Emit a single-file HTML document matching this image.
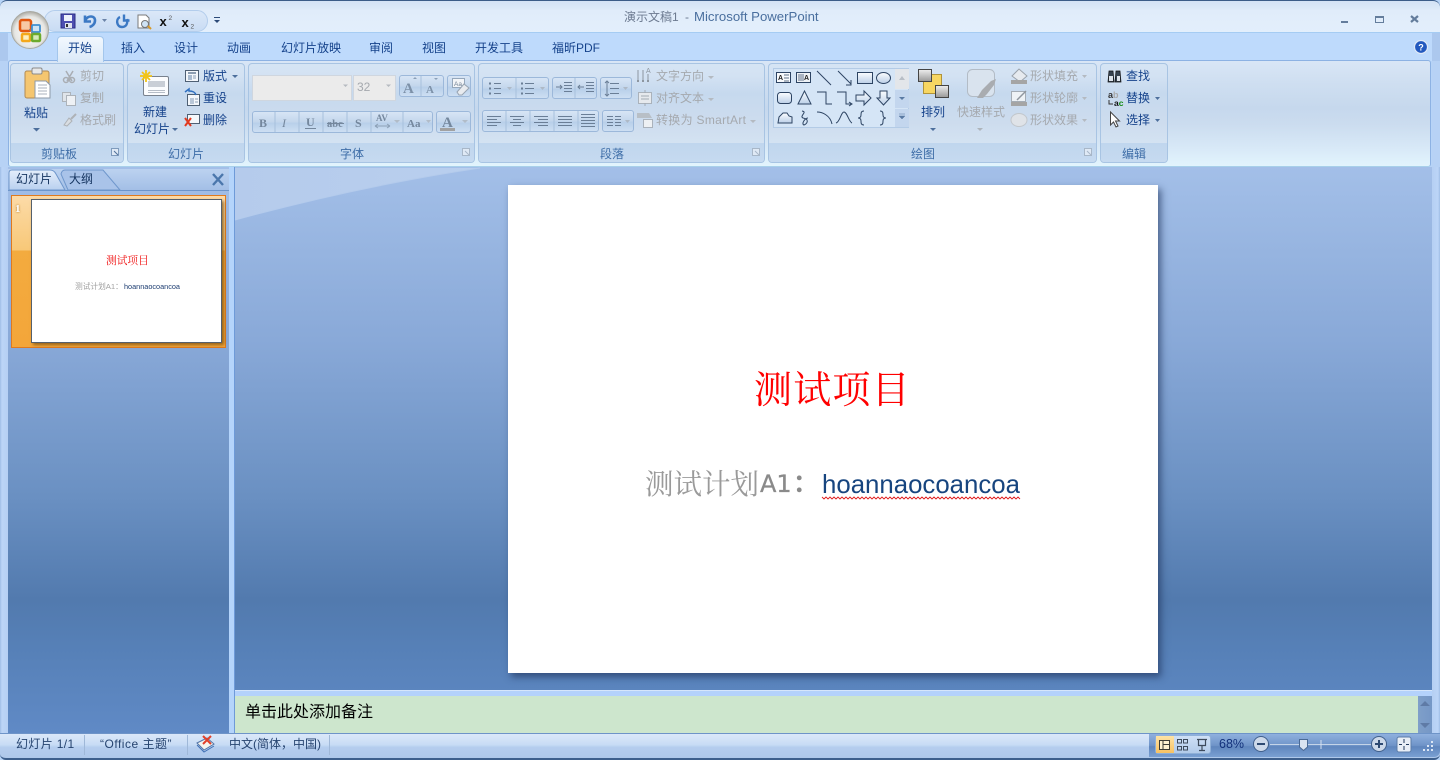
<!DOCTYPE html>
<html lang="zh-CN">
<head>
<meta charset="utf-8">
<title>演示文稿1 - Microsoft PowerPoint</title>
<style>
html,body{margin:0;padding:0;width:1440px;height:760px;overflow:hidden;background:#b7d4f7}
#app{position:relative;width:1440px;height:760px;overflow:hidden;font-family:"Liberation Sans","Noto Sans CJK SC",sans-serif}
.a{position:absolute}
.t{position:absolute;z-index:2;white-space:nowrap;font-size:12px;line-height:14px;color:#15428b;font-family:"Liberation Sans","Noto Sans CJK SC",sans-serif}
.d{color:#a5a9ae}
.g{position:absolute;top:63px;height:100px;box-sizing:border-box;border:1px solid #a8c4e3;border-radius:4px;background:linear-gradient(#d5e4f4 0,#d3e2f3 12%,#c6d9ee 30%,#cddcee 60%,#d4e3f2 80px);overflow:hidden}
.g i{position:absolute;left:0;right:0;bottom:0;height:19px;background:linear-gradient(#c0d6ee,#c6daf0)}
.l{position:absolute;z-index:2;white-space:nowrap;font-size:12px;line-height:14px;color:#3f6ea8;top:147px}
.b{position:absolute;box-sizing:border-box;border:1px solid #9cb8da;border-radius:3px;background:linear-gradient(#d7e5f5,#c3d6ec 50%,#b8cfe9 55%,#cddff2)}
.tb{position:absolute;z-index:2;top:41px;white-space:nowrap;font-size:12px;line-height:14px;color:#15428b}
svg{position:absolute;left:0;top:0;z-index:1}
</style>
</head>
<body>
<div id="app">
  <!-- window frame -->
  <div class="a" style="left:0;top:0;width:1440px;height:33px;background:linear-gradient(#d3e2f5 0,#dce9f8 8px,#e0ecfa 9px,#e3effc 32px);border-top:1px solid #3b5c88;box-sizing:border-box;border-radius:7px 7px 0 0"></div>
  <div class="a" style="left:0;top:32px;width:1440px;height:1px;background:#a5ccf3"></div>
  <div class="a" style="left:0;top:33px;width:1440px;height:28px;background:#bedafc"></div>
  <div class="a" style="left:0;top:33px;width:8px;height:28px;background:#acc8ee"></div>
  <div class="a" style="left:1432px;top:33px;width:8px;height:28px;background:#acc8ee"></div>
  <div class="a" style="left:8px;top:60px;width:1423px;height:107px;box-sizing:border-box;border:1px solid #8db2e3;border-bottom:1px solid #a8d0ea;border-radius:3px;background:linear-gradient(#d9e6f6 0,#cfdff1 20%,#c6d8ed 45%,#cbdcef 60%,#d6e7f6 80%,#e2f4fd 100%)"></div>
  <div class="a" style="left:0;top:61px;width:8px;height:107px;background:#b7d2f5"></div>
  <div class="a" style="left:1432px;top:61px;width:8px;height:107px;background:#b7d2f5"></div>

  <!-- main background -->
  <div class="a" style="left:0;top:167px;width:1440px;height:568px;background:linear-gradient(#a3bfe8 0,#89a9d8 173px,#6a90c2 330px,#527aae 433px,#5680b7 480px,#608ac6 568px)"></div>
  <div class="a" style="left:0;top:167px;width:8px;height:568px;background:linear-gradient(90deg,#9fbde6 0,#bcd5f7 2px,#b5cff3 8px)"></div>
  <div class="a" style="left:229px;top:167px;width:5px;height:568px;background:#b4d4fb;border-right:1px solid #6e9ad8;box-sizing:content-box"></div>
  <div class="a" style="left:1432px;top:167px;width:8px;height:568px;background:linear-gradient(90deg,#b5cff3,#bcd5f7 6px,#9fbde6)"></div>

  <!-- groups -->
  <div class="g" style="left:10px;width:114px"><i></i></div>
  <div class="g" style="left:127px;width:118px"><i></i></div>
  <div class="g" style="left:248px;width:227px"><i></i></div>
  <div class="g" style="left:478px;width:287px"><i></i></div>
  <div class="g" style="left:768px;width:329px"><i></i></div>
  <div class="g" style="left:1100px;width:68px"><i></i></div>

  <!-- font/para controls -->
  <div class="a" style="left:252px;top:75px;width:100px;height:26px;box-sizing:border-box;background:#ebebeb;border:1px solid #cfd6df"></div>
  <div class="a" style="left:353px;top:75px;width:43px;height:26px;box-sizing:border-box;background:#ebebeb;border:1px solid #cfd6df"></div>
  <div class="b" style="left:399px;top:75px;width:45px;height:22px"></div>
  <div class="b" style="left:447px;top:75px;width:24px;height:22px"></div>
  <div class="b" style="left:252px;top:111px;width:181px;height:22px"></div>
  <div class="b" style="left:436px;top:111px;width:35px;height:22px"></div>
  <div class="b" style="left:482px;top:77px;width:67px;height:22px"></div>
  <div class="b" style="left:552px;top:77px;width:45px;height:22px"></div>
  <div class="b" style="left:600px;top:77px;width:32px;height:22px"></div>
  <div class="b" style="left:482px;top:110px;width:117px;height:22px"></div>
  <div class="b" style="left:602px;top:110px;width:32px;height:22px"></div>
  <div class="a" style="left:773px;top:68px;width:136px;height:60px;box-sizing:border-box;border:1px solid #b3cbe6;background:#d5e5f6"></div>
  <div class="a" style="left:895px;top:69px;width:14px;height:20px;background:#e3e6ea"></div>
  <div class="a" style="left:895px;top:90px;width:14px;height:18px;background:#c3d6ee"></div>
  <div class="a" style="left:895px;top:109px;width:14px;height:18px;background:#c3d6ee"></div>

  <!-- active tab -->
  <div class="a" style="left:57px;top:36px;width:47px;height:26px;box-sizing:border-box;border:1px solid #a3c6ec;border-bottom:0;border-radius:4px 4px 0 0;background:linear-gradient(#f2f8fe,#dbe9f8)"></div>

  <!-- quick access pill -->
  <div class="a" style="left:44px;top:10px;width:164px;height:22px;box-sizing:border-box;border:1px solid #b3cdec;border-radius:11px;background:linear-gradient(#dbe8f8,#c9dcf4)"></div>

  <!-- slide pane tabs -->
  <div class="a" style="left:8px;top:169px;width:221px;height:21px;background:linear-gradient(#bcd2f0,#a3bfe6)"></div>
  <div class="a" style="left:8px;top:190px;width:221px;height:1px;background:#6c94ca"></div>

  <!-- thumbnail -->
  <div class="a" style="left:11px;top:195px;width:215px;height:153px;box-sizing:border-box;border:1px solid #e07a1d;background:linear-gradient(#fcdba8 0,#f8c878 54px,#f3ab3f 55px,#f3a63a 100%)"></div>
  <div class="a" style="left:31px;top:199px;width:191px;height:144px;box-sizing:border-box;background:#fff;border:1px solid #55606c;box-shadow:2px 2px 3px rgba(110,70,10,.7)"></div>
  <div class="t" style="left:15px;top:202px;font:bold 11px/14px 'Liberation Serif',serif;color:#fff;text-shadow:0 0 2px #a86a10">1</div>
  <div class="t" style="left:106px;top:254px;font-size:10.7px;color:#f01010;font-family:'Noto Serif CJK SC',serif">测试项目</div>
  <div class="t" style="left:75px;top:280px;font-size:7.7px;color:#a0a0a0">测试计划A1：</div>
  <div class="t" style="left:124px;top:280px;font-size:7.3px;color:#1c3c70">hoannaocoancoa</div>

  <!-- slide -->
  <div class="a" style="left:508px;top:185px;width:650px;height:488px;background:#fff;box-shadow:3px 4px 7px rgba(30,50,90,.65)"></div>
  <div class="t" style="left:754px;top:364px;font-size:38px;line-height:46px;letter-spacing:1.2px;color:#f00;font-family:'Noto Serif CJK SC',serif">测试项目</div>
  <div class="t" style="left:645px;top:466px;font-size:28.5px;line-height:34px;color:#9a9a9a;font-family:'Noto Serif CJK SC',serif">测试计划</div>
  <div class="t" style="left:760px;top:468px;font-size:24px;line-height:32px;color:#8a8a8a;-webkit-text-stroke:.3px #8a8a8a;font-family:'DejaVu Sans',sans-serif">A1</div>
  <div class="t" style="left:793px;top:468px;font-size:25px;line-height:32px;font-weight:bold;color:#8a8a8a">：</div>
  <div class="t" style="left:822px;top:469px;font-size:25.8px;line-height:32px;color:#17457f">hoannaocoancoa</div>

  <!-- notes -->
  <div class="a" style="left:235px;top:690px;width:1197px;height:6px;background:#b4d2fb;border-top:1px solid #d6e6fb;box-sizing:border-box"></div>
  <div class="a" style="left:235px;top:696px;width:1183px;height:38px;background:#cde6cd"></div>
  <div class="a" style="left:1418px;top:696px;width:14px;height:38px;background:linear-gradient(90deg,#7f9fc9,#7597c6)"></div>
  <div class="t" style="left:245px;top:703px;font-size:16px;line-height:20px;color:#000">单击此处添加备注</div>

  <!-- status bar -->
  <div class="a" style="left:0;top:733px;width:1440px;height:27px;box-sizing:border-box;border-top:1px solid #6e94c8;border-bottom:2px solid #3d5f8c;background:linear-gradient(#dbe8f9 0,#c8dcf5 45%,#b5cdee 55%,#aec8ea 100%);border-radius:0 0 6px 6px"></div>
  <div class="a" style="left:1149px;top:734px;width:291px;height:23px;background:linear-gradient(#8fb0de,#6f94c8 50%,#5f86bd 55%,#7aa0d2);border-radius:0 0 6px 0"></div>
  <div class="a" style="left:84px;top:735px;width:1px;height:20px;background:#9fb8d8"></div>
  <div class="a" style="left:187px;top:735px;width:1px;height:20px;background:#9fb8d8"></div>
  <div class="a" style="left:329px;top:735px;width:1px;height:20px;background:#9fb8d8"></div>
  <div class="a" style="left:1155px;top:735px;width:56px;height:19px;box-sizing:border-box;border:1px solid #8fb0d8;border-radius:3px;background:linear-gradient(#cfe0f6,#b2cbea)"></div>
  <div class="a" style="left:1156px;top:736px;width:18px;height:17px;background:linear-gradient(#fde3a5,#f8c262)"></div>

  <!-- text: title -->
  <div class="t" style="left:624px;top:10px;color:#6c7a90">演示文稿1</div>
  <div class="t" style="left:685px;top:10px;color:#6c7a90">-</div>
  <div class="t" style="left:694px;top:10px;font-size:13.2px;color:#4a6f9e">Microsoft PowerPoint</div>

  <!-- tabs -->
  <div class="tb" style="left:68px">开始</div>
  <div class="tb" style="left:121px">插入</div>
  <div class="tb" style="left:174px">设计</div>
  <div class="tb" style="left:227px">动画</div>
  <div class="tb" style="left:281px">幻灯片放映</div>
  <div class="tb" style="left:369px">审阅</div>
  <div class="tb" style="left:422px">视图</div>
  <div class="tb" style="left:475px">开发工具</div>
  <div class="tb" style="left:552px">福昕PDF</div>

  <!-- ribbon text -->
  <div class="t" style="left:24px;top:106px">粘贴</div>
  <div class="t d" style="left:80px;top:69px">剪切</div>
  <div class="t d" style="left:80px;top:91px">复制</div>
  <div class="t d" style="left:80px;top:113px">格式刷</div>
  <div class="l" style="left:41px">剪贴板</div>

  <div class="t" style="left:143px;top:105px">新建</div>
  <div class="t" style="left:134px;top:122px">幻灯片</div>
  <div class="t" style="left:203px;top:69px">版式</div>
  <div class="t" style="left:203px;top:91px">重设</div>
  <div class="t" style="left:203px;top:113px">删除</div>
  <div class="l" style="left:168px">幻灯片</div>

  <div class="t d" style="left:357px;top:80px">32</div>
  <div class="l" style="left:340px">字体</div>

  <div class="t d" style="left:656px;top:69px">文字方向</div>
  <div class="t d" style="left:656px;top:91px">对齐文本</div>
  <div class="t d" style="left:656px;top:113px;letter-spacing:.3px">转换为 SmartArt</div>
  <div class="l" style="left:600px">段落</div>

  <div class="t" style="left:921px;top:105px">排列</div>
  <div class="t d" style="left:957px;top:105px">快速样式</div>
  <div class="t d" style="left:1030px;top:69px">形状填充</div>
  <div class="t d" style="left:1030px;top:91px">形状轮廓</div>
  <div class="t d" style="left:1030px;top:113px">形状效果</div>
  <div class="l" style="left:911px">绘图</div>

  <div class="t" style="left:1126px;top:69px">查找</div>
  <div class="t" style="left:1126px;top:91px">替换</div>
  <div class="t" style="left:1126px;top:113px">选择</div>
  <div class="l" style="left:1122px">编辑</div>

  <!-- pane tabs text -->
  <div class="t" style="left:16px;top:172px;color:#15345f">幻灯片</div>
  <div class="t" style="left:69px;top:172px;color:#15345f">大纲</div>

  <!-- status text -->
  <div class="t" style="left:16px;top:737px;color:#25436f;letter-spacing:.35px">幻灯片 1/1</div>
  <div class="t" style="left:100px;top:737px;color:#25436f;letter-spacing:.5px">“Office 主题”</div>
  <div class="t" style="left:229px;top:737px;color:#25436f">中文(简体，中国)</div>
  <div class="t" style="left:1219px;top:737px;font-size:12.5px;color:#12307a">68%</div>

  <!-- all icons -->
  <svg width="1440" height="760" viewBox="0 0 1440 760" fill="none">
    <defs>
      <radialGradient id="orb" cx=".5" cy=".55" r=".55"><stop offset="0" stop-color="#fff"/><stop offset=".75" stop-color="#e6e6e3"/><stop offset="1" stop-color="#aaa9a2"/></radialGradient>
      <linearGradient id="pg" x1="0" y1="0" x2="0" y2="1"><stop offset="0" stop-color="#fbfdff"/><stop offset="1" stop-color="#bcd0e8"/></linearGradient>
      <linearGradient id="gr" x1="0" y1="0" x2="0" y2="1"><stop offset="0" stop-color="#eee"/><stop offset="1" stop-color="#999"/></linearGradient>
      <linearGradient id="tab1" x1="0" y1="0" x2="0" y2="1"><stop offset="0" stop-color="#e4eefb"/><stop offset="1" stop-color="#b9d0ef"/></linearGradient>
      <linearGradient id="refl" x1="0" y1="0" x2="1" y2="0"><stop offset="0" stop-color="#b5cbec"/><stop offset="1" stop-color="#b9cfee"/></linearGradient>
    </defs>

    <!-- pane reflection -->
    <path d="M235 220 Q360 186 480 168 L235 168 Z" fill="url(#refl)"/>
    <path d="M235 220 Q360 186 480 168" stroke="#b4cbec" stroke-width="1"/>

    <!-- office button -->
    <circle cx="30" cy="30" r="18.500" fill="url(#orb)" stroke="#a9a9a1"/>
    <rect x="20" y="20" width="11" height="11" rx="2" fill="#f7c9a4" stroke="#e2570f" stroke-width="2.500"/>
    <rect x="32" y="25" width="8" height="7" rx="1" fill="#cfe3f3" stroke="#3f8fd0" stroke-width="1.800"/>
    <rect x="22" y="34" width="8" height="7" rx="1" fill="#fdeebf" stroke="#f4a81c" stroke-width="2.500"/>
    <rect x="32" y="34" width="8" height="7" rx="1" fill="#d6eab9" stroke="#6cab2d" stroke-width="2.500"/>
    <g fill="#888"><rect x="29" y="29" width="1.500" height="1.500"/><rect x="31" y="32" width="1.500" height="1.500"/></g>

    <!-- QAT: save -->
    <rect x="61" y="14" width="14" height="14" fill="#4e4fb0" stroke="#2b2c86"/>
    <rect x="64" y="15" width="8" height="6" fill="#eef2fb"/>
    <rect x="65" y="23" width="7" height="5" fill="#dfe3ee"/>
    <rect x="66" y="24" width="2" height="3" fill="#333"/>
    <!-- undo -->
    <path d="M85 15.500 V21.500 H91 M85.500 20 C88 15 95 15.500 95 20.500 C95 24 92 26.500 89.500 27" stroke="#3c79c4" stroke-width="2.600"/>
    <path d="M102 19 L107 19 L104.500 22 Z" fill="#6b83a8"/>
    <!-- redo -->
    <path d="M120 17 C115.500 19 116.500 27 122 27 C126 27 128 24 127 19 M124 14.500 V20.500 H129.500" stroke="#3c79c4" stroke-width="2.400"/>
    <!-- print preview -->
    <path d="M138 15 H146 L149 18 V28 H138 Z" fill="#fff" stroke="#7a7a7a"/>
    <circle cx="145" cy="24" r="3.500" fill="#cfe3f5" stroke="#777"/>
    <path d="M148 26 L151 29" stroke="#d89a2a" stroke-width="2"/>
    <!-- x2 -->
    <text x="159.500" y="26" font-size="13" font-weight="bold" fill="#111" font-family="Liberation Sans">x</text>
    <text x="168.500" y="20" font-size="6.500" fill="#555" font-family="Liberation Sans">2</text>
    <text x="181.500" y="27" font-size="13" font-weight="bold" fill="#111" font-family="Liberation Sans">x</text>
    <text x="190.500" y="28.500" font-size="6.500" fill="#555" font-family="Liberation Sans">2</text>
    <!-- customize -->
    <path d="M214 17.500 H220" stroke="#2c4a78"/><path d="M214 20 L220 20 L217 23 Z" fill="#2c4a78"/>

    <!-- caption buttons -->
    <rect x="1341" y="21" width="7" height="2" fill="#647d9c"/>
    <rect x="1375.500" y="16.500" width="8" height="6" stroke="#647d9c"/><rect x="1375" y="16" width="9" height="2" fill="#647d9c"/>
    <path d="M1411 16 L1418 22 M1418 16 L1411 22" stroke="#647d9c" stroke-width="2.200"/>
    <!-- help -->
    <circle cx="1421" cy="47" r="6.500" fill="#2359bf" stroke="#e0e9f6" stroke-width="1.200"/>
    <text x="1418.300" y="50.500" font-size="9" font-weight="bold" fill="#fff" font-family="Liberation Sans">?</text>

    <!-- paste -->
    <rect x="25" y="71" width="24" height="27" rx="2" fill="#f5c670" stroke="#b28a52"/>
    <rect x="32" y="68" width="10" height="6" rx="1.500" fill="#e7e7e7" stroke="#8b8b8b"/>
    <path d="M35 81 H46 L50 85 V98 H35 Z" fill="#fff" stroke="#8d9aa8"/>
    <path d="M38 85 H47 M38 88 H47 M38 91 H47 M38 94 H47" stroke="#a8b2bd"/>
    <path d="M33 128 H40 L36.500 131.500 Z" fill="#4d6f9c"/>
    <!-- cut/copy/brush disabled -->
    <path d="M66 71 L72 81 M73 71 L67 81" stroke="#a9adb3" stroke-width="1.500"/>
    <circle cx="66" cy="80" r="2.500" stroke="#a9adb3" stroke-width="1.500"/><circle cx="72" cy="80" r="2.500" stroke="#a9adb3" stroke-width="1.500"/>
    <rect x="62.500" y="92.500" width="8" height="9" fill="#dfe4ea" stroke="#adb3ba"/><rect x="66.500" y="95.500" width="9" height="10" fill="#eef1f5" stroke="#adb3ba"/>
    <path d="M64 125 L69 118 L72 121 L67 126 Z" fill="#d9dde2" stroke="#aeb2b7"/><path d="M71 119 L76 114" stroke="#aeb2b7" stroke-width="2"/>

    <!-- new slide -->
    <rect x="143.500" y="76.500" width="25" height="19" rx="1.500" fill="#fbfcfe" stroke="#79828e"/>
    <rect x="148" y="81" width="17" height="6" fill="#c9ced6"/>
    <path d="M148 90.500 H165 M148 92.500 H165" stroke="#b6bdc7"/>
    <path d="M146 70 V82 M140 76 H152 M142 72 L150 80 M150 72 L142 80" stroke="#f2c416" stroke-width="1.800"/>
    <path d="M172 128 H178 L175 131 Z" fill="#4d6f9c"/>
    <!-- layout -->
    <rect x="185.500" y="70.500" width="13" height="11" fill="#f4f7fb" stroke="#4f6074"/>
    <path d="M188 73 H196" stroke="#6a7f98" stroke-width="1.500"/><rect x="188" y="75" width="4" height="5" fill="#a9bbd0"/><path d="M193 76 H196 M193 78 H196" stroke="#8c9fb4"/>
    <path d="M232 75 H238 L235 78 Z" fill="#4d6f9c"/>
    <!-- reset -->
    <rect x="187.500" y="94.500" width="12" height="11" fill="#f4f7fb" stroke="#4f6074"/>
    <rect x="190" y="98" width="4" height="6" fill="#b9c7d8"/><path d="M195 99 H198 M195 102 H198" stroke="#8c9fb4"/>
    <path d="M185 92 L189 89 V91 C193 91 195 92 196 95" stroke="#2f6fc0" stroke-width="1.500"/>
    <!-- delete -->
    <rect x="187.500" y="114.500" width="12" height="9" fill="#f4f7fb" stroke="#4f6074"/>
    <path d="M185 118 L191 126 M191 118 L185 126" stroke="#e23a1f" stroke-width="2"/>

    <!-- font -->
    <path d="M343 84.500 H348 L345.500 87 Z" fill="#b5bac0"/>
    <path d="M386 84.500 H391 L388.500 87 Z" fill="#b5bac0"/>
    <path d="M421 76 V96" stroke="#a7c0dc"/>
    <text x="403" y="93" font-size="15" font-weight="bold" fill="#7d91a8" font-family="Liberation Serif">A</text>
    <path d="M413 79 L415 77 L417 79 Z" fill="#8ba0b8"/>
    <text x="426" y="93" font-size="11" font-weight="bold" fill="#7d91a8" font-family="Liberation Serif">A</text>
    <path d="M434 78 H438 L436 80 Z" fill="#8ba0b8"/>
    <rect x="452.500" y="78.500" width="12" height="9" fill="#f3f5f8" stroke="#95a7bb"/>
    <text x="454" y="86" font-size="6.500" fill="#6e7f92" font-family="Liberation Sans">Aa</text>
    <path d="M457 92 L464 84 L469 88 L462 95 H459 Z" fill="#e8ebef" stroke="#98a4b2"/>

    <g stroke="#a7c0dc"><path d="M275 112 V132 M299 112 V132 M323 112 V132 M347 112 V132 M371 112 V132 M403 112 V132"/></g>
    <g font-family="Liberation Serif" fill="#74879d" font-size="12" font-weight="bold">
      <text x="259" y="127">B</text><text x="282" y="127" font-style="italic" font-weight="normal">I</text><text x="306" y="126">U</text>
      <text x="327" y="127" font-size="10.500">abc</text><text x="355" y="127">S</text>
      <text x="376" y="121" font-size="9">AV</text><text x="407" y="127" font-size="11">Aa</text>
    </g>
    <path d="M305 128.500 H316" stroke="#74879d"/><path d="M327 123.500 H344" stroke="#74879d"/>
    <path d="M375 126 H390 M375 126 L378 124 M375 126 L378 128 M390 126 L387 124 M390 126 L387 128" stroke="#8ca0b6"/>
    <path d="M394 120 H400 L397 123 Z M426 120 H431 L428.500 123 Z M462 120 H468 L465 123 Z" fill="#b1bcc8"/>
    <text x="442" y="127" font-size="15" font-weight="bold" fill="#74879d" font-family="Liberation Serif">A</text>
    <rect x="440" y="128" width="15" height="3" fill="#a1a1a1"/>

    <!-- launchers -->
    <g stroke="#7f9bbc" fill="#dfe9f5">
      <rect x="111.500" y="148.500" width="7" height="7"/><path d="M114 151 L118 155" stroke="#4e6f98"/>
    </g>
    <g stroke="#a8b7c8" fill="#dfe9f5">
      <rect x="462.500" y="148.500" width="7" height="7"/><path d="M465 151 L469 155"/>
      <rect x="752.500" y="148.500" width="7" height="7"/><path d="M755 151 L759 155"/>
      <rect x="1084.500" y="148.500" width="7" height="7"/><path d="M1087 151 L1091 155"/>
    </g>

    <!-- paragraph -->
    <g stroke="#a7c0dc"><path d="M516 78 V98 M575 78 V98 M506 111 V131 M530 111 V131 M554 111 V131 M578 111 V131"/></g>
    <g stroke="#6a7e96">
      <path d="M494 83.500 H501 M494 88.500 H501 M494 93.500 H501 M525 83.500 H534 M525 88.500 H534 M525 93.500 H534"/>
      <path d="M489 83.500 H491 M489 88.500 H491 M489 93.500 H491 M521 83.500 H523 M521 88.500 H523 M521 93.500 H523" stroke-width="2"/>
      <path d="M564 82.500 H572 M564 85.500 H572 M564 88.500 H572 M564 91.500 H572 M556 87 H562 M560 85 L562 87 L560 89"/>
      <path d="M586 82.500 H594 M586 85.500 H594 M586 88.500 H594 M586 91.500 H594 M578 87 H584 M580 85 L578 87 L580 89"/>
      <path d="M610 83.500 H619 M610 88.500 H619 M610 93.500 H619 M607 81 V96 M605 83 L607 81 L609 83 M605 94 L607 96 L609 94"/>
      <path d="M487 116.500 H501 M487 119.500 H497 M487 122.500 H501 M487 125.500 H497"/>
      <path d="M510 116.500 H524 M513 119.500 H521 M510 122.500 H524 M513 125.500 H521"/>
      <path d="M534 116.500 H548 M538 119.500 H548 M534 122.500 H548 M538 125.500 H548"/>
      <path d="M558 116.500 H572 M558 119.500 H572 M558 122.500 H572 M558 125.500 H572"/>
      <path d="M581 117.500 H595 M581 120.500 H595 M581 123.500 H595 M581 126.500 H595 M581 114.500 H595"/>
      <path d="M607 116.500 H613 M607 119.500 H613 M607 122.500 H613 M607 125.500 H613 M615 116.500 H621 M615 119.500 H621 M615 122.500 H621 M615 125.500 H621"/>
    </g>
    <path d="M507 87 H512 L509.500 90 Z M540 87 H545 L542.500 90 Z M623 87 H628 L625.500 90 Z M625 120 H630 L627.500 123 Z" fill="#aeb9c6"/>
    <!-- text dir -->
    <g stroke="#8d96a0"><path d="M638 70 V81 M643 70 V81 M648 74 V81"/></g>
    <text x="646" y="73" font-size="7" fill="#8d96a0" font-family="Liberation Sans">A</text>
    <path d="M637 81 H651" stroke="#8d96a0" stroke-dasharray="2 3" stroke-width="2"/>
    <path d="M708 76 H714 L711 79 Z M708 98 H714 L711 101 Z M750 120 H756 L753 123 Z" fill="#b4bac1"/>
    <rect x="638.500" y="92.500" width="13" height="11" fill="#e6e9ed" stroke="#aab2bb"/>
    <path d="M641 96 H649 M641 99 H649" stroke="#a3abb4"/><path d="M645 90 V93 M645 103 V106" stroke="#a3abb4"/>
    <path d="M637 113 H649 L652 118 H637 Z" fill="#b8bfc6"/>
    <rect x="643.500" y="119.500" width="9" height="8" fill="#edf0f3" stroke="#aab2bb"/>

    <!-- shapes -->
    <g stroke="#2d4463" fill="none">
      <rect x="776.500" y="72.500" width="14" height="10" fill="#f8fafc"/>
      <text x="778" y="80" font-size="7" font-weight="bold" stroke="none" fill="#222" font-family="Liberation Sans">A</text>
      <path d="M784 75 H789 M784 78 H789 M784 81 H789" stroke-width=".7"/>
      <rect x="796.500" y="72.500" width="14" height="10" fill="#eef2f6"/>
      <path d="M799 74 V81 M801 74 V81 M803 74 V81" stroke-width=".7"/>
      <text x="804" y="80" font-size="7" font-weight="bold" stroke="none" fill="#222" font-family="Liberation Sans">A</text>
      <path d="M817 71 L831 85"/>
      <path d="M838 71 L851 84 M851 80 V85 H846"/>
      <rect x="857.500" y="72.500" width="15" height="11" fill="url(#pg)"/>
      <ellipse cx="883.500" cy="78" rx="7" ry="5.500" fill="url(#pg)"/>
      <rect x="777.500" y="92.500" width="14" height="11" rx="3" fill="url(#pg)"/>
      <path d="M804.500 91 L798 104 H811 Z" fill="url(#pg)"/>
      <path d="M817 92 H826 V104 H832"/>
      <path d="M837 92 H846 V104 H851 M849 102 L852 104 L849 106"/>
      <path d="M856 95 H864 V91 L871 98 L864 105 V101 H856 Z" fill="url(#pg)"/>
      <path d="M880 91 H887 V98 H890 L883.500 105 L877 98 H880 Z" fill="url(#pg)"/>
      <path d="M778 123 L779 117 L783 113 H787 L789 116 L792 117 V123 Z" fill="url(#pg)"/>
      <path d="M802 111 C808 112 799 116 803 118 C810 119 807 124 804 125 C801 124 805 118 808 118"/>
      <path d="M817 112 C822 112 830 115 832 124"/>
      <path d="M836 123 C840 122 841 112 844 112 C847 112 849 122 852 123"/>
      <path d="M864 111 C861 111 861 113 861 115 C861 117 860 118 858 118 C860 118 861 119 861 121 C861 123 861 125 864 125"/>
      <path d="M880 111 C883 111 883 113 883 115 C883 117 884 118 886 118 C884 118 883 119 883 121 C883 123 883 125 880 125"/>
    </g>
    <path d="M899 80 L902 76 L905 80 Z" fill="#b8bec6"/>
    <path d="M899 97 H905 L902 100 Z" fill="#5a7aa3"/>
    <path d="M899 114 H905 M899 116 H905 L902 119 Z" fill="#5a7aa3" stroke="#5a7aa3" stroke-width=".5"/>
    <!-- arrange -->
    <rect x="923.500" y="74.500" width="18" height="19" fill="#f7d662" stroke="#b0933a"/>
    <rect x="918.500" y="69.500" width="13" height="12" fill="url(#gr)" stroke="#444"/>
    <rect x="935.500" y="85.500" width="13" height="12" fill="url(#gr)" stroke="#444"/>
    <path d="M930 128 H936 L933 131 Z" fill="#4d6f9c"/>
    <!-- quick styles -->
    <rect x="967.500" y="69.500" width="27" height="27" rx="5" fill="#d9e3ee" stroke="#b3bcc6"/>
    <path d="M977 98 L982 90 L991 81 L996 79 L994 85 L987 94 L983 98 Z" fill="#a9acb0"/>
    <path d="M977 128 H983 L980 131 Z" fill="#aeb4bb"/>
    <!-- fill, outline, effects -->
    <path d="M1012 76 L1019 69 L1027 76 L1020 82 Z" fill="#e6eaef" stroke="#9aa2ab"/>
    <rect x="1011" y="80" width="16" height="4" fill="#a5a5a5"/>
    <rect x="1011.500" y="91.500" width="14" height="10" fill="#eef2f6" stroke="#a4acb5"/>
    <path d="M1017 100 L1026 91" stroke="#8f979f" stroke-width="1.500"/>
    <rect x="1011" y="102" width="16" height="4" fill="#a5a5a5"/>
    <ellipse cx="1019" cy="120" rx="8" ry="6.500" fill="#dfe3e8" stroke="#c2c7cc"/>
    <path d="M1082 75 H1087 L1084.500 78 Z M1082 97 H1087 L1084.500 100 Z M1082 119 H1087 L1084.500 122 Z" fill="#b4bac1"/>

    <!-- find, replace, select -->
    <path d="M1109 71 H1113 L1114 82 H1108 Z M1116 71 H1120 L1121 82 H1115 Z" fill="#36424f" stroke="#111" stroke-width=".7"/>
    <rect x="1109" y="76" width="4" height="5" fill="#dfe5ec"/><rect x="1117" y="76" width="3" height="5" fill="#dfe5ec"/>
    <text x="1108" y="98" font-size="9" font-weight="bold" fill="#333" font-family="Liberation Sans">a</text>
    <text x="1113" y="98" font-size="9" font-weight="bold" fill="#aaa" font-family="Liberation Sans">b</text>
    <text x="1114" y="106" font-size="8.500" font-weight="bold" fill="#111" font-family="Liberation Sans">a<tspan fill="#108a10">c</tspan></text>
    <path d="M1109 100 V104 H1113" stroke="#333"/>
    <path d="M1110.500 112 V125 L1113.500 122 L1116 127 L1118 126 L1115.500 121 L1119.500 121 Z" fill="#fff" stroke="#444"/>
    <path d="M1155 97 H1160 L1157.500 100 Z M1155 119 H1160 L1157.500 122 Z" fill="#4d6f9c"/>

    <!-- pane tabs -->
    <path d="M61 174 Q62 170 65 170 H103 L120 190 H68 Z" fill="#a9c3e9" stroke="#6f97cc"/>
    <path d="M9 190 V173 Q9 170 12 170 H50 Q54 170 56 174 L65 190 Z" fill="url(#tab1)" stroke="#6f97cc"/>
    <path d="M213 174 L223 185 M223 174 L213 185" stroke="#4b77ac" stroke-width="2.400"/>

    <!-- spell underline -->
    <path d="M822 497 L824 499 L826 497 L828 499 L830 497 L832 499 L834 497 L836 499 L838 497 L840 499 L842 497 L844 499 L846 497 L848 499 L850 497 L852 499 L854 497 L856 499 L858 497 L860 499 L862 497 L864 499 L866 497 L868 499 L870 497 L872 499 L874 497 L876 499 L878 497 L880 499 L882 497 L884 499 L886 497 L888 499 L890 497 L892 499 L894 497 L896 499 L898 497 L900 499 L902 497 L904 499 L906 497 L908 499 L910 497 L912 499 L914 497 L916 499 L918 497 L920 499 L922 497 L924 499 L926 497 L928 499 L930 497 L932 499 L934 497 L936 499 L938 497 L940 499 L942 497 L944 499 L946 497 L948 499 L950 497 L952 499 L954 497 L956 499 L958 497 L960 499 L962 497 L964 499 L966 497 L968 499 L970 497 L972 499 L974 497 L976 499 L978 497 L980 499 L982 497 L984 499 L986 497 L988 499 L990 497 L992 499 L994 497 L996 499 L998 497 L1000 499 L1002 497 L1004 499 L1006 497 L1008 499 L1010 497 L1012 499 L1014 497 L1016 499 L1018 497 L1020 499" stroke="#e01818" stroke-width=".9"/>

    <!-- notes scroll arrows -->
    <path d="M1420 706 L1425 701 L1430 706 Z M1420 723 H1430 L1425 728 Z" fill="#5f7ba6"/>

    <!-- status proofing -->
    <path d="M197 743 L207 738 L214 744 L204 750 Z" fill="#f4f4ee" stroke="#5576a8"/>
    <path d="M197 745 L204 752 L214 746" stroke="#3f6fb4"/>
    <path d="M203 736 L211 744 M211 736 L203 744" stroke="#e2402a" stroke-width="2"/>

    <!-- view buttons -->
    <rect x="1159.500" y="740.500" width="10" height="9" stroke="#3d3d35" fill="#fff3d0"/><path d="M1163 741 V749 M1163.500 744.500 H1169" stroke="#3d3d35"/>
    <g stroke="#3d4a5c" fill="none"><rect x="1177.500" y="739.500" width="4" height="3.500"/><rect x="1183.500" y="739.500" width="4" height="3.500"/><rect x="1177.500" y="746.500" width="4" height="3.500"/><rect x="1183.500" y="746.500" width="4" height="3.500"/>
    <path d="M1197 739.500 H1207 M1198.500 740 V745.500 H1205.500 V740 M1202 746 V750 M1199 750.500 H1205" stroke-width="1.200"/></g>

    <!-- zoom -->
    <circle cx="1261" cy="744" r="7.500" fill="#cdd9ea" stroke="#41608c"/><path d="M1257 744 H1265" stroke="#2e4a72" stroke-width="2"/>
    <path d="M1270 744.500 H1371" stroke="#c4d4e8"/><path d="M1321 740 V749" stroke="#d4e0f0"/>
    <path d="M1299.500 739.500 H1307.500 V747 L1303.500 750.500 L1299.500 747 Z" fill="#d9e3f1" stroke="#4a6a96"/>
    <circle cx="1379" cy="744" r="7.500" fill="#cdd9ea" stroke="#41608c"/><path d="M1375 744 H1383 M1379 740 V748" stroke="#2e4a72" stroke-width="2"/>
    <rect x="1397" y="737" width="14" height="15" rx="2" fill="#e8eef6" stroke="#5b7ca8"/>
    <path d="M1404 739 V743 M1404 746 V750 M1399 744.500 H1402 M1406 744.500 H1409" stroke="#223a5c"/>
    <g fill="#dbe6f5"><rect x="1431" y="741" width="2" height="2"/><rect x="1427" y="745" width="2" height="2"/><rect x="1431" y="745" width="2" height="2"/><rect x="1423" y="749" width="2" height="2"/><rect x="1427" y="749" width="2" height="2"/><rect x="1431" y="749" width="2" height="2"/></g>
  </svg>
</div>
</body>
</html>
